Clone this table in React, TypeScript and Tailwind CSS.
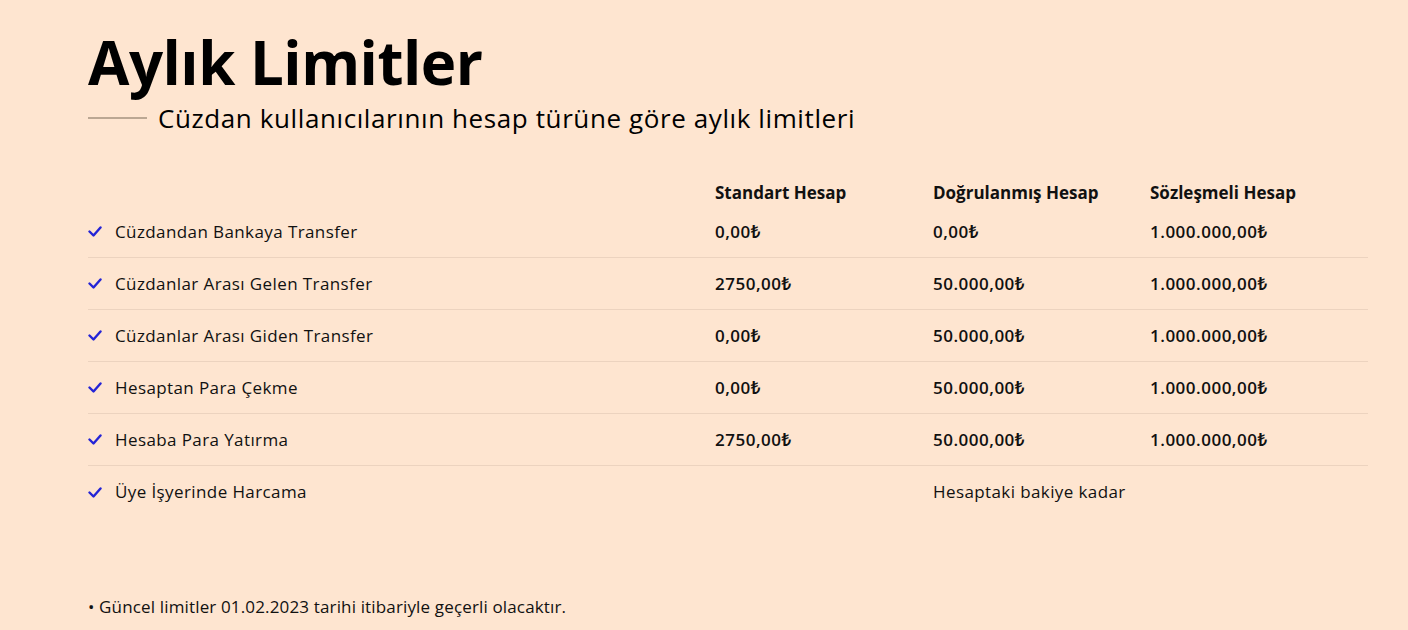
const rows = [
  { label: "Cüzdandan Bankaya Transfer", std: "0,00₺", verified: "0,00₺", contract: "1.000.000,00₺" },
  { label: "Cüzdanlar Arası Gelen Transfer", std: "2750,00₺", verified: "50.000,00₺", contract: "1.000.000,00₺" },
  { label: "Cüzdanlar Arası Giden Transfer", std: "0,00₺", verified: "50.000,00₺", contract: "1.000.000,00₺" },
  { label: "Hesaptan Para Çekme", std: "0,00₺", verified: "50.000,00₺", contract: "1.000.000,00₺" },
  { label: "Hesaba Para Yatırma", std: "2750,00₺", verified: "50.000,00₺", contract: "1.000.000,00₺" },
];

function Check() {
  return (
    <svg viewBox="0 0 14 11" className="h-[11px] w-[14px] shrink-0" fill="none">
      <path d="M1.5 5.5 L5.5 9.5 L12.5 1.5" stroke="#2424d6" strokeWidth="2.4" strokeLinecap="round" strokeLinejoin="round" />
    </svg>
  );
}

function Label({ text }: { text: string }) {
  return (
    <div className="flex items-center gap-[13px]">
      <Check />
      <span>{text}</span>
    </div>
  );
}

export default function App() {
  return (
    <div
      className="min-h-[630px] w-full bg-[#fee5d0] pl-[88px] pr-[40px] pt-[26px] text-[#111]"
      style={{ fontFamily: "'Open Sans', 'Noto Sans', sans-serif" }}
    >
      <h1 className="text-[60px] font-bold leading-[72px] tracking-[-0.5px] text-black">Aylık Limitler</h1>
      <div className="mt-[4px] flex items-center gap-[11px]">
        <div className="h-[2px] w-[59px] bg-[#bba793]" />
        <p className="text-[26px] font-medium leading-[32px] tracking-[0.6px] text-black">
          Cüzdan kullanıcılarının hesap türüne göre aylık limitleri
        </p>
      </div>

      <div className="mt-[46px] text-[17px] font-medium tracking-[0.4px]">
        <div className="grid h-[26px] grid-cols-[627px_218px_217px_218px] items-center font-bold tracking-normal">
          <div />
          <div>Standart Hesap</div>
          <div>Doğrulanmış Hesap</div>
          <div>Sözleşmeli Hesap</div>
        </div>
        {rows.map((r) => (
          <div
            key={r.label}
            className="grid h-[52px] grid-cols-[627px_218px_217px_218px] items-center border-b border-[#ecd3bf]"
          >
            <Label text={r.label} />
            <div className="font-semibold tracking-[0.5px]">{r.std}</div>
            <div className="font-semibold tracking-[0.5px]">{r.verified}</div>
            <div className="font-semibold tracking-[0.5px]">{r.contract}</div>
          </div>
        ))}
        <div className="grid h-[52px] grid-cols-[627px_218px_217px_218px] items-center">
          <Label text="Üye İşyerinde Harcama" />
          <div />
          <div className="col-span-2">Hesaptaki bakiye kadar</div>
        </div>
      </div>

      <p className="mt-[77px] text-[17px] font-medium leading-[24px] tracking-[0.15px]">
        • Güncel limitler 01.02.2023 tarihi itibariyle geçerli olacaktır.
      </p>
    </div>
  );
}
